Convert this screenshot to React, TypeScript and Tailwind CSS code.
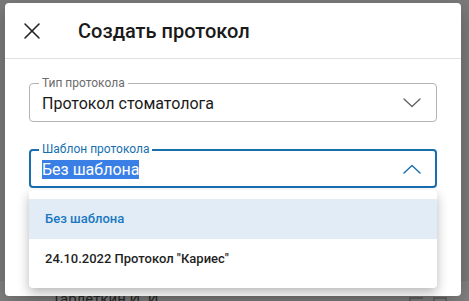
import { X } from "lucide-react";

function Chevron({ up, color }: { up?: boolean; color: string }) {
  return (
    <svg width="18" height="10" viewBox="0 0 18 10" fill="none">
      <path
        d={up ? "M1 9L9 1.5L17 9" : "M1 1L9 8.5L17 1"}
        stroke={color}
        strokeWidth="1.4"
        strokeLinecap="round"
        strokeLinejoin="round"
      />
    </svg>
  );
}

const options = ["Без шаблона", '24.10.2022 Протокол "Кариес"'];

export default function App() {
  return (
    <div
      className="relative w-[469px] h-[301px] overflow-hidden bg-[#7b7b7b]"
      style={{ fontFamily: "Roboto, 'Liberation Sans', sans-serif" }}
    >
      {/* page behind the modal */}
      <div className="flex h-full flex-col justify-end">
        <div className="flex h-[20px] items-end justify-between bg-[#828282] pl-[52px] pr-[22px]">
          <span className="translate-y-[6px] text-[15px] leading-none text-[#2b2b2b]">
            Тарлеткин И. И.
          </span>
          <div className="flex translate-y-[6px] gap-[10px]">
            <div className="h-[10px] w-[14px] border-t-2 border-l-2 border-[#555] opacity-60" />
            <div className="h-[10px] w-[14px] border-2 border-[#555] opacity-60" />
          </div>
        </div>
      </div>

      {/* modal */}
      <div className="absolute left-[5px] top-[3px] h-[293px] w-[456px] rounded-[4px] bg-white shadow-[0_6px_20px_rgba(0,0,0,0.25)]">
        <div className="flex h-[56px] items-center border-b border-[#e0e0e0] pl-[13px]">
          <X size={28} strokeWidth={1.3} className="text-[#222]" />
          <h1 className="ml-[32px] text-[20px] font-medium text-[#1a1a1a]">
            Создать протокол
          </h1>
        </div>

        <div className="flex flex-col gap-[27px] px-[24px] pt-[24px]">
          <div className="relative flex h-[39px] items-center justify-between rounded-[4px] border border-[#b3b3b3] pl-[12px] pr-[15px]">
            <span className="absolute left-[9px] top-[-8px] bg-white px-[3px] text-[12px] leading-[14px] text-[#6b6b6b]">
              Тип протокола
            </span>
            <span className="pt-[3px] text-[16px] text-[#1a1a1a]">
              Протокол стоматолога
            </span>
            <Chevron color="#666" />
          </div>

          <div className="relative">
            <div className="relative flex h-[39px] items-center justify-between rounded-[4px] border-2 border-[#176fb0] pl-[11px] pr-[14px]">
              <span className="absolute left-[8px] top-[-9px] bg-white px-[3px] text-[12px] leading-[14px] text-[#176fb0]">
                Шаблон протокола
              </span>
              <span className="pt-[3px] text-[16px] leading-[16px]">
                <span className="bg-[#3a7fe6] text-white">Без шаблона</span>
              </span>
              <Chevron up color="#176fb0" />
            </div>

            <div className="absolute left-0 right-0 top-[41px] z-10 rounded-[4px] bg-white py-[9px] shadow-[0_5px_12px_rgba(0,0,0,0.28)]">
              {options.map((opt, i) => (
                <div
                  key={opt}
                  className={`flex h-[40px] items-center pl-[16px] text-[13px] font-medium ${
                    i === 0 ? "bg-[#e2ecf6] text-[#1a78c2]" : "text-[#1f1f1f]"
                  }`}
                >
                  {opt}
                </div>
              ))}
            </div>
          </div>
        </div>
      </div>
    </div>
  );
}
